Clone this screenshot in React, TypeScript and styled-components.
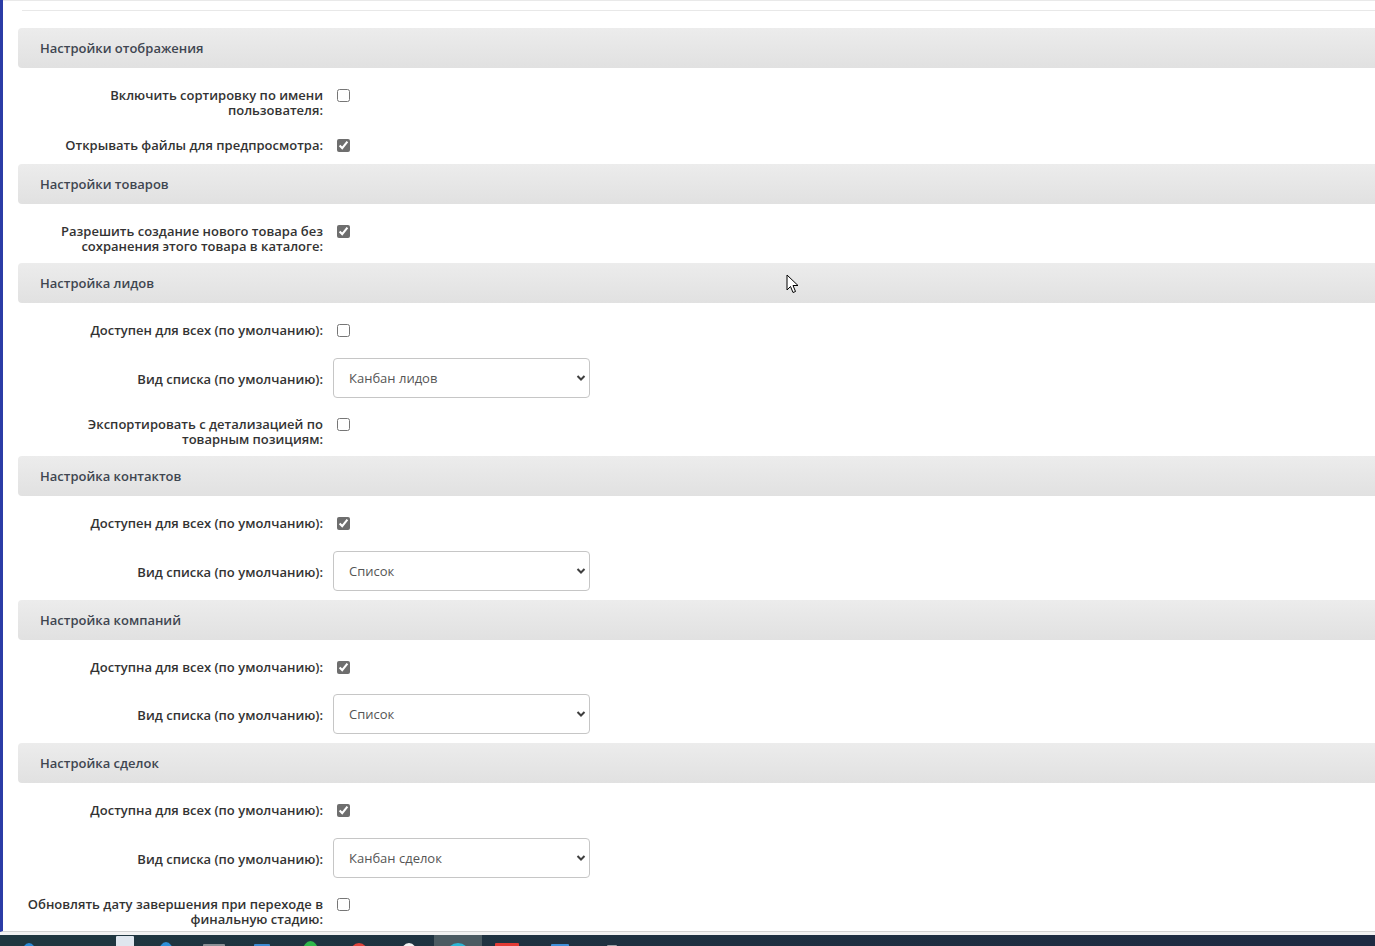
import React from "react";
import styled, { createGlobalStyle } from "styled-components";

const GlobalStyle = createGlobalStyle`
  html, body { margin: 0; padding: 0; background: #fff; }
  body { font-family: "Open Sans", "Noto Sans", sans-serif; overflow: hidden; }
  * { box-sizing: border-box; }
`;

const Screen = styled.div`
  position: relative;
  width: 1375px;
  height: 946px;
  display: flex;
  flex-direction: column;
  overflow: hidden;
`;

const Viewport = styled.div`
  flex: 1;
  min-height: 0;
  display: flex;
  flex-direction: column;
  border-bottom: 3px solid #f2f2f2;
`;

const Main = styled.div`
  flex: 1;
  min-height: 0;
  border-left: 3px solid #2b3ca6;
  border-bottom: 1px solid #d3d3d3;
  overflow: hidden;
`;

const Content = styled.div`
  border-top: 1px solid #e9e9e9;
  padding-top: 9px;
`;

const TopRule = styled.div`
  margin-left: 19px;
  border-top: 1px solid #e8e8e8;
  margin-bottom: 17px;
`;

const Section = styled.section`
  margin-left: 15px;
`;

const SectionHeader = styled.div`
  height: 40px;
  display: flex;
  align-items: center;
  padding-left: 22px;
  border-top-left-radius: 4px;
  border-bottom-left-radius: 4px;
  background: linear-gradient(to bottom, #ececec, #e1e1e1);
  font-size: 13px;
  font-weight: 600;
  color: #3f4651;
`;

const SectionBody = styled.div<{ $first?: boolean }>`
  padding: 20px 0 ${(p) => (p.$first ? 11.5 : 9)}px;
  display: flex;
  flex-direction: column;
  gap: 19.5px;
`;

const Row = styled.div<{ $center?: boolean }>`
  display: grid;
  grid-template-columns: 315px auto;
  align-items: ${(p) => (p.$center ? "center" : "start")};
`;

const Label = styled.label<{ $center?: boolean }>`
  padding-right: 10px;
  padding-top: ${(p) => (p.$center ? 3 : 0)}px;
  text-align: right;
  font-size: 13px;
  line-height: 15px;
  font-weight: 600;
  color: #333;
`;

const CheckCell = styled.div`
  display: flex;
  align-items: flex-start;
  height: 15px;
`;

const Check = styled.input.attrs({ type: "checkbox", readOnly: true })`
  width: 13px;
  height: 13px;
  margin: 1px 0 0 4px;
  accent-color: #6e6e6e;
`;

const SelectWrap = styled.div`
  position: relative;
  width: 257px;
  height: 40px;
`;

const Select = styled.select`
  appearance: none;
  width: 100%;
  height: 100%;
  border: 1px solid #c6c6c6;
  border-radius: 4px;
  padding: 0 30px 0 15px;
  background: #fff;
  font-family: "Open Sans", "Noto Sans", sans-serif;
  font-size: 13px;
  color: #555;
`;

const Chevron = styled.svg`
  position: absolute;
  right: 4px;
  top: 16px;
  width: 10px;
  height: 8px;
  pointer-events: none;
`;

const Taskbar = styled.div`
  height: 11px;
  display: flex;
  align-items: flex-start;
  background: linear-gradient(to right, #1f3740, #1e2a42);
  padding-left: 20px;
`;

const TaskSlot = styled.div<{ $active?: boolean; $w?: number }>`
  width: ${(p) => p.$w ?? 48}px;
  height: 11px;
  display: flex;
  justify-content: center;
  align-items: flex-start;
  background: ${(p) => (p.$active ? "#4b5b62" : "transparent")};
`;

const TaskIcon = styled.div<{ $color: string; $round?: boolean; $top: number; $w: number }>`
  margin-top: ${(p) => p.$top}px;
  width: ${(p) => p.$w}px;
  height: 20px;
  background: ${(p) => p.$color};
  border-radius: ${(p) => (p.$round ? "50%" : "1px")};
`;

const Cursor = styled.svg`
  position: absolute;
  left: 786px;
  top: 274px;
  width: 14px;
  height: 21px;
`;

type Field =
  | { kind: "check"; label: React.ReactNode; checked: boolean }
  | { kind: "select"; label: string; value: string };

const sections: { title: string; fields: Field[] }[] = [
  {
    title: "Настройки отображения",
    fields: [
      { kind: "check", label: <>Включить сортировку по имени<br />пользователя:</>, checked: false },
      { kind: "check", label: "Открывать файлы для предпросмотра:", checked: true },
    ],
  },
  {
    title: "Настройки товаров",
    fields: [
      { kind: "check", label: <>Разрешить создание нового товара без<br />сохранения этого товара в каталоге:</>, checked: true },
    ],
  },
  {
    title: "Настройка лидов",
    fields: [
      { kind: "check", label: "Доступен для всех (по умолчанию):", checked: false },
      { kind: "select", label: "Вид списка (по умолчанию):", value: "Канбан лидов" },
      { kind: "check", label: <>Экспортировать с детализацией по<br />товарным позициям:</>, checked: false },
    ],
  },
  {
    title: "Настройка контактов",
    fields: [
      { kind: "check", label: "Доступен для всех (по умолчанию):", checked: true },
      { kind: "select", label: "Вид списка (по умолчанию):", value: "Список" },
    ],
  },
  {
    title: "Настройка компаний",
    fields: [
      { kind: "check", label: "Доступна для всех (по умолчанию):", checked: true },
      { kind: "select", label: "Вид списка (по умолчанию):", value: "Список" },
    ],
  },
  {
    title: "Настройка сделок",
    fields: [
      { kind: "check", label: "Доступна для всех (по умолчанию):", checked: true },
      { kind: "select", label: "Вид списка (по умолчанию):", value: "Канбан сделок" },
      { kind: "check", label: <>Обновлять дату завершения при переходе в<br />финальную стадию:</>, checked: false },
    ],
  },
];

const taskItems: { w: number; active?: boolean; icon?: { color: string; round?: boolean; top: number; w: number } }[] = [
  { w: 18, icon: { color: "#2a8ad8", round: true, top: 8, w: 14 } },
  { w: 70 },
  { w: 34, icon: { color: "#dfe6ee", top: 1, w: 18 } },
  { w: 48, icon: { color: "#2f8fd8", round: true, top: 7, w: 14 } },
  { w: 48, icon: { color: "#8a9096", top: 9, w: 22 } },
  { w: 48, icon: { color: "#3c8ad2", top: 9, w: 16 } },
  { w: 48, icon: { color: "#2fb84a", round: true, top: 6, w: 15 } },
  { w: 50, icon: { color: "#e0433a", round: true, top: 8, w: 18 } },
  { w: 50, icon: { color: "#f4f4f4", round: true, top: 8, w: 16 } },
  { w: 48, active: true, icon: { color: "#2bb6d6", round: true, top: 8, w: 22 } },
  { w: 50, icon: { color: "#e23a34", top: 8, w: 24 } },
  { w: 56, icon: { color: "#3d8fd9", top: 9, w: 18 } },
  { w: 48, icon: { color: "#9aa0a6", top: 10, w: 10 } },
];

export default function App() {
  return (
    <>
      <GlobalStyle />
      <Screen>
        <Viewport>
          <Main>
            <Content>
              <TopRule />
              {sections.map((s, si) => (
                <Section key={s.title}>
                  <SectionHeader>{s.title}</SectionHeader>
                  <SectionBody $first={si === 0}>
                    {s.fields.map((f, i) =>
                      f.kind === "check" ? (
                        <Row key={i}>
                          <Label>{f.label}</Label>
                          <CheckCell>
                            <Check defaultChecked={f.checked} />
                          </CheckCell>
                        </Row>
                      ) : (
                        <Row key={i} $center>
                          <Label $center>{f.label}</Label>
                          <SelectWrap>
                            <Select defaultValue={f.value}>
                              <option>{f.value}</option>
                            </Select>
                            <Chevron viewBox="0 0 10 8">
                              <path d="M1.5 2 L5 5.5 L8.5 2" fill="none" stroke="#3f3f3f" strokeWidth="2" />
                            </Chevron>
                          </SelectWrap>
                        </Row>
                      )
                    )}
                  </SectionBody>
                </Section>
              ))}
            </Content>
          </Main>
        </Viewport>
        <Taskbar>
          {taskItems.map((t, i) => (
            <TaskSlot key={i} $w={t.w} $active={t.active}>
              {t.icon && <TaskIcon $color={t.icon.color} $round={t.icon.round} $top={t.icon.top} $w={t.icon.w} />}
            </TaskSlot>
          ))}
        </Taskbar>
        <Cursor viewBox="0 0 14 21">
          <path
            d="M1 1 L1 16 L4.5 12.5 L7 18.5 L9.5 17.5 L7 11.5 L12 11.5 Z"
            fill="#fff"
            stroke="#000"
            strokeWidth="1"
            strokeLinejoin="round"
          />
        </Cursor>
      </Screen>
    </>
  );
}
